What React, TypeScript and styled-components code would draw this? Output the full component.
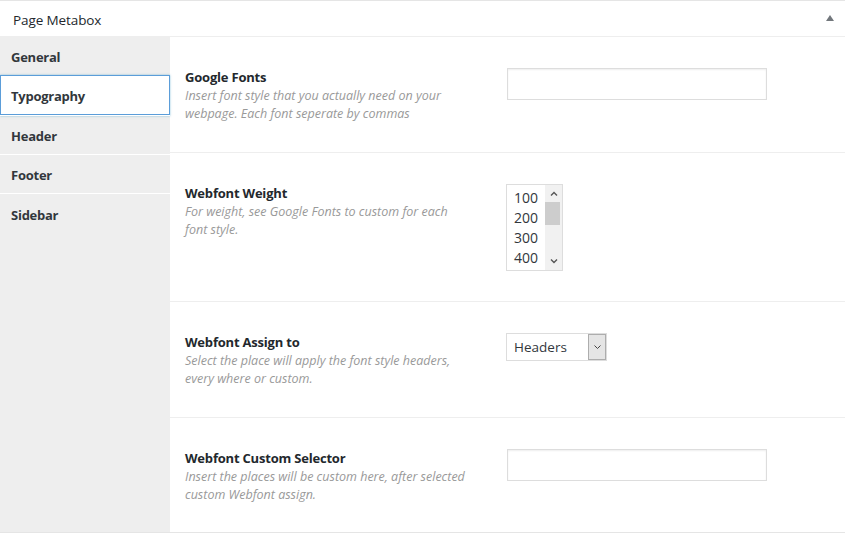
import styled, { createGlobalStyle } from "styled-components";

const GlobalStyle = createGlobalStyle`
    html, body {
        margin: 0;
        padding: 0;
        background: #fff;
    }
    body {
        font-family: "Open Sans", "Noto Sans", sans-serif;
        color: #23282d;
    }
`;

const tabs = ["General", "Typography", "Header", "Footer", "Sidebar"];

interface Field {
    title: string;
    desc: string[];
    control: "text" | "list" | "select";
}

const fields: Field[] = [
    {
        title: "Google Fonts",
        desc: ["Insert font style that you actually need on your", "webpage. Each font seperate by commas"],
        control: "text",
    },
    {
        title: "Webfont Weight",
        desc: ["For weight, see Google Fonts to custom for each", "font style."],
        control: "list",
    },
    {
        title: "Webfont Assign to",
        desc: ["Select the place will apply the font style headers,", "every where or custom."],
        control: "select",
    },
    {
        title: "Webfont Custom Selector",
        desc: ["Insert the places will be custom here, after selected", "custom Webfont assign."],
        control: "text",
    },
];

function WeightList() {
    return (
        <ListBox>
            <ListOptions>
                {["100", "200", "300", "400"].map((w) => (
                    <ListOption key={w}>{w}</ListOption>
                ))}
            </ListOptions>
            <ScrollTrack>
                <ScrollArrow>
                    <svg width="8" height="5" viewBox="0 0 8 5">
                        <path d="M1 4.5 L4 1.5 L7 4.5" fill="none" stroke="#555" strokeWidth="1.4" />
                    </svg>
                </ScrollArrow>
                <ScrollThumb />
                <ScrollSpacer />
                <ScrollArrow>
                    <svg width="8" height="5" viewBox="0 0 8 5">
                        <path d="M1 0.5 L4 3.5 L7 0.5" fill="none" stroke="#555" strokeWidth="1.4" />
                    </svg>
                </ScrollArrow>
            </ScrollTrack>
        </ListBox>
    );
}

function AssignSelect() {
    return (
        <SelectBox>
            <SelectValue>Headers</SelectValue>
            <SelectButton>
                <svg width="7" height="4" viewBox="0 0 7 4">
                    <path d="M0.5 0.5 L3.5 3.5 L6.5 0.5" fill="none" stroke="#444" strokeWidth="1" />
                </svg>
            </SelectButton>
        </SelectBox>
    );
}

export default function App() {
    return (
        <>
            <GlobalStyle />
            <Metabox>
                <BoxHeader>
                    <BoxTitle>Page Metabox</BoxTitle>
                    <ToggleArrow />
                </BoxHeader>
                <BoxBody>
                    <TabNav>
                        {tabs.map((t) => (
                            <TabItem key={t} $active={t === "Typography"}>{t}</TabItem>
                        ))}
                    </TabNav>
                    <Fields>
                        {fields.map((f) => (
                            <FieldRow key={f.title}>
                                <FieldLabel>
                                    <FieldTitle>{f.title}</FieldTitle>
                                    <FieldDesc>
                                        {f.desc.map((line) => (
                                            <span key={line}>{line}</span>
                                        ))}
                                    </FieldDesc>
                                </FieldLabel>
                                <FieldControl>
                                    {f.control === "text" && <TextInput />}
                                    {f.control === "list" && <WeightList />}
                                    {f.control === "select" && <AssignSelect />}
                                </FieldControl>
                            </FieldRow>
                        ))}
                    </Fields>
                </BoxBody>
            </Metabox>
        </>
    );
}

const Metabox = styled.div`
    width: 845px;
    height: 533px;
    box-sizing: border-box;
    border-top: 1px solid #e5e5e5;
    border-bottom: 1px solid #e5e5e5;
    display: flex;
    flex-direction: column;
    background: #fff;
`;

const BoxHeader = styled.div`
    height: 36px;
    box-sizing: border-box;
    border-bottom: 1px solid #eee;
    display: flex;
    align-items: center;
    justify-content: space-between;
    padding: 2px 11px 0 13px;
    flex-shrink: 0;
`;

const BoxTitle = styled.h2`
    margin: 0;
    font-size: 13.5px;
    font-weight: 400;
    color: #23282d;
    letter-spacing: -0.1px;
`;

const ToggleArrow = styled.span`
    width: 0;
    height: 0;
    border-left: 4px solid transparent;
    border-right: 4px solid transparent;
    border-bottom: 6px solid #72777c;
    margin-top: -3px;
`;

const BoxBody = styled.div`
    flex: 1;
    display: flex;
    min-height: 0;
`;

const TabNav = styled.ul`
    width: 170px;
    margin: 0;
    padding: 0;
    list-style: none;
    background: #eee;
    flex-shrink: 0;
`;

const TabItem = styled.li<{ $active: boolean }>`
    box-sizing: border-box;
    display: flex;
    align-items: center;
    padding: 2px 0 0 11px;
    font-size: 13px;
    font-weight: 700;
    color: #32373c;
    letter-spacing: -0.25px;
    border-bottom: 1px solid #fff;
    background: ${({ $active }) => ($active ? "#fff" : "transparent")};
    box-shadow: ${({ $active }) => ($active ? "inset 0 0 0 1px #5b9dd9, 0 0 2px rgba(30,140,190,.5)" : "none")};
    height: ${({ $active }) => ($active ? "41px" : "39px")};
    margin-top: ${({ $active }) => ($active ? "-1px" : "0")};

    &:last-child {
        border-bottom: none;
    }
`;

const Fields = styled.div`
    flex: 1;
    display: flex;
    flex-direction: column;
`;

const FieldRow = styled.div`
    display: flex;
    padding: 31px 15px 29px 15px;
    border-bottom: 1px solid #eee;

    &:last-child {
        border-bottom: none;
    }
`;

const FieldLabel = styled.div`
    width: 290px;
    flex-shrink: 0;
    margin-right: 32px;
`;

const FieldTitle = styled.div`
    font-size: 13px;
    font-weight: 700;
    color: #23282d;
    line-height: 18px;
    letter-spacing: -0.2px;
`;

const FieldDesc = styled.p`
    margin: 1px 0 0;
    font-size: 12.5px;
    font-style: italic;
    color: #999;
    line-height: 18px;
    display: flex;
    flex-direction: column;
`;

const FieldControl = styled.div``;

const TextInput = styled.input.attrs({ type: "text" })`
    width: 260px;
    height: 32px;
    box-sizing: border-box;
    border: 1px solid #ddd;
    box-shadow: inset 0 1px 2px rgba(0, 0, 0, 0.07);
    background: #fff;
    margin: 0;
    outline: none;
`;

const ListBox = styled.div`
    width: 57px;
    height: 87px;
    box-sizing: border-box;
    border: 1px solid #ddd;
    display: flex;
    background: #fff;
    margin: 0 0 1px -1px;
`;

const ListOptions = styled.div`
    flex: 1;
    padding: 3px 0 0 7px;
    overflow: hidden;
`;

const ListOption = styled.div`
    font-size: 14px;
    line-height: 20px;
    color: #32373c;
`;

const ScrollTrack = styled.div`
    width: 17px;
    background: #f1f1f1;
    display: flex;
    flex-direction: column;
`;

const ScrollArrow = styled.div`
    height: 17px;
    display: flex;
    align-items: center;
    justify-content: center;
`;

const ScrollThumb = styled.div`
    height: 23px;
    margin: 0 2px 0 0;
    background: #cdcdcd;
`;

const ScrollSpacer = styled.div`
    flex: 1;
`;

const SelectBox = styled.div`
    width: 101px;
    height: 28px;
    box-sizing: border-box;
    border: 1px solid #ddd;
    display: flex;
    align-items: stretch;
    margin-left: -1px;
    background: #fff;
`;

const SelectValue = styled.span`
    flex: 1;
    font-size: 13.5px;
    color: #32373c;
    display: flex;
    align-items: center;
    padding-left: 7px;
`;

const SelectButton = styled.span`
    width: 16px;
    background: #e5e5e5;
    border: 1px solid #adadad;
    display: flex;
    align-items: center;
    justify-content: center;
`;
